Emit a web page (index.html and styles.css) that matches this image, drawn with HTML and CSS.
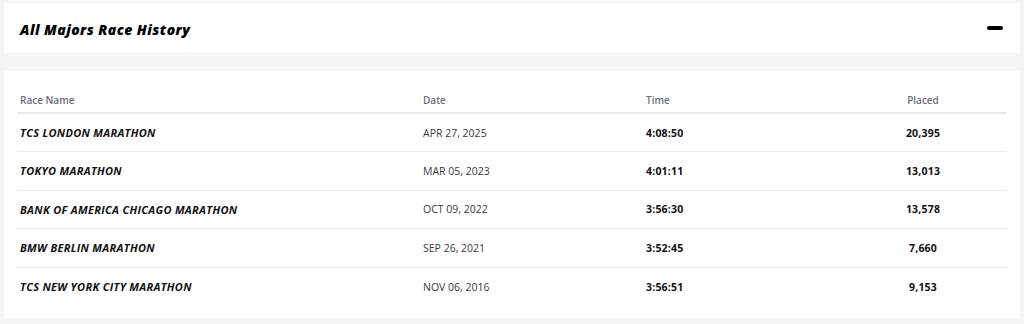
FILE: index.html
```html
<!DOCTYPE html>
<html lang="en">
<head>
<meta charset="utf-8">
<title>All Majors Race History</title>
<link rel="stylesheet" href="styles.css">
</head>
<body>
<div class="page">
  <section class="card header-card">
    <h2 class="title">All Majors Race History</h2>
    <button class="toggle" aria-label="Collapse"><span class="minus"></span></button>
  </section>
  <section class="card table-card">
    <table class="races">
      <colgroup>
        <col class="c-name"><col class="c-date"><col class="c-time"><col class="c-placed"><col class="c-rest">
      </colgroup>
      <thead>
        <tr><th>Race Name</th><th>Date</th><th>Time</th><th class="center">Placed</th><th></th></tr>
      </thead>
      <tbody>
        <tr><td class="name">TCS LONDON MARATHON</td><td class="date">APR 27, 2025</td><td class="time">4:08:50</td><td class="placed">20,395</td><td></td></tr>
        <tr><td class="name">TOKYO MARATHON</td><td class="date">MAR 05, 2023</td><td class="time">4:01:11</td><td class="placed">13,013</td><td></td></tr>
        <tr><td class="name">BANK OF AMERICA CHICAGO MARATHON</td><td class="date">OCT 09, 2022</td><td class="time">3:56:30</td><td class="placed">13,578</td><td></td></tr>
        <tr><td class="name">BMW BERLIN MARATHON</td><td class="date">SEP 26, 2021</td><td class="time">3:52:45</td><td class="placed">7,660</td><td></td></tr>
        <tr><td class="name">TCS NEW YORK CITY MARATHON</td><td class="date">NOV 06, 2016</td><td class="time">3:56:51</td><td class="placed">9,153</td><td></td></tr>
      </tbody>
    </table>
  </section>
</div>
</body>
</html>
```

FILE: styles.css
```css
* { box-sizing: border-box; }
html, body { margin: 0; padding: 0; }
body {
  background: #f4f5f7;
  font-family: "Open Sans", "Liberation Sans", sans-serif;
  color: #1a1a1a;
}
.page {
  padding: 3px 4px 6px 4px;
  display: flex;
  flex-direction: column;
  gap: 18px;
}
.card { background: #ffffff; }
.header-card {
  height: 50px;
  display: flex;
  align-items: center;
  justify-content: space-between;
  padding: 0 17px 0 16px;
}
.title {
  margin: 0;
  font-size: 14px;
  font-weight: 800;
  font-style: italic;
  color: #000;
  letter-spacing: 0.45px;
  position: relative;
  top: 1px;
}
.toggle {
  border: 0;
  background: none;
  padding: 0;
  width: 16px;
  height: 16px;
  display: flex;
  align-items: center;
  justify-content: center;
  cursor: pointer;
}
.minus {
  display: block;
  width: 16px;
  height: 4px;
  border-radius: 2px;
  background: #000;
}
.table-card {
  padding: 16px 13px 12px 13px;
}
.races {
  width: 990px;
  border-collapse: collapse;
  table-layout: fixed;
}
.c-name { width: 403px; }
.c-date { width: 223px; }
.c-time { width: 223px; }
.c-placed { width: 114px; }
.c-rest { width: 27px; }
.races th {
  text-align: left;
  font-size: 10px;
  font-weight: 600;
  color: #6b6e80;
  padding: 0 3px;
  height: 26px;
  vertical-align: middle;
  border-bottom: 2px solid #ebebef;
}
.races th.center { text-align: center; }
.races td {
  height: 38.5px;
  padding: 0 3px;
  font-size: 10.5px;
  vertical-align: middle;
  border-bottom: 1px solid #ebebef;
}
.races tbody tr:last-child td { border-bottom: 0; }
.races td.name { font-size: 11px; font-weight: 700; font-style: italic; color: #111; letter-spacing: 0.3px; }
.date { color: #3a3a3a; }
.time { font-weight: 700; color: #111; letter-spacing: 0.2px; }
.placed { font-weight: 700; color: #111; text-align: center; letter-spacing: 0.2px; }
```
